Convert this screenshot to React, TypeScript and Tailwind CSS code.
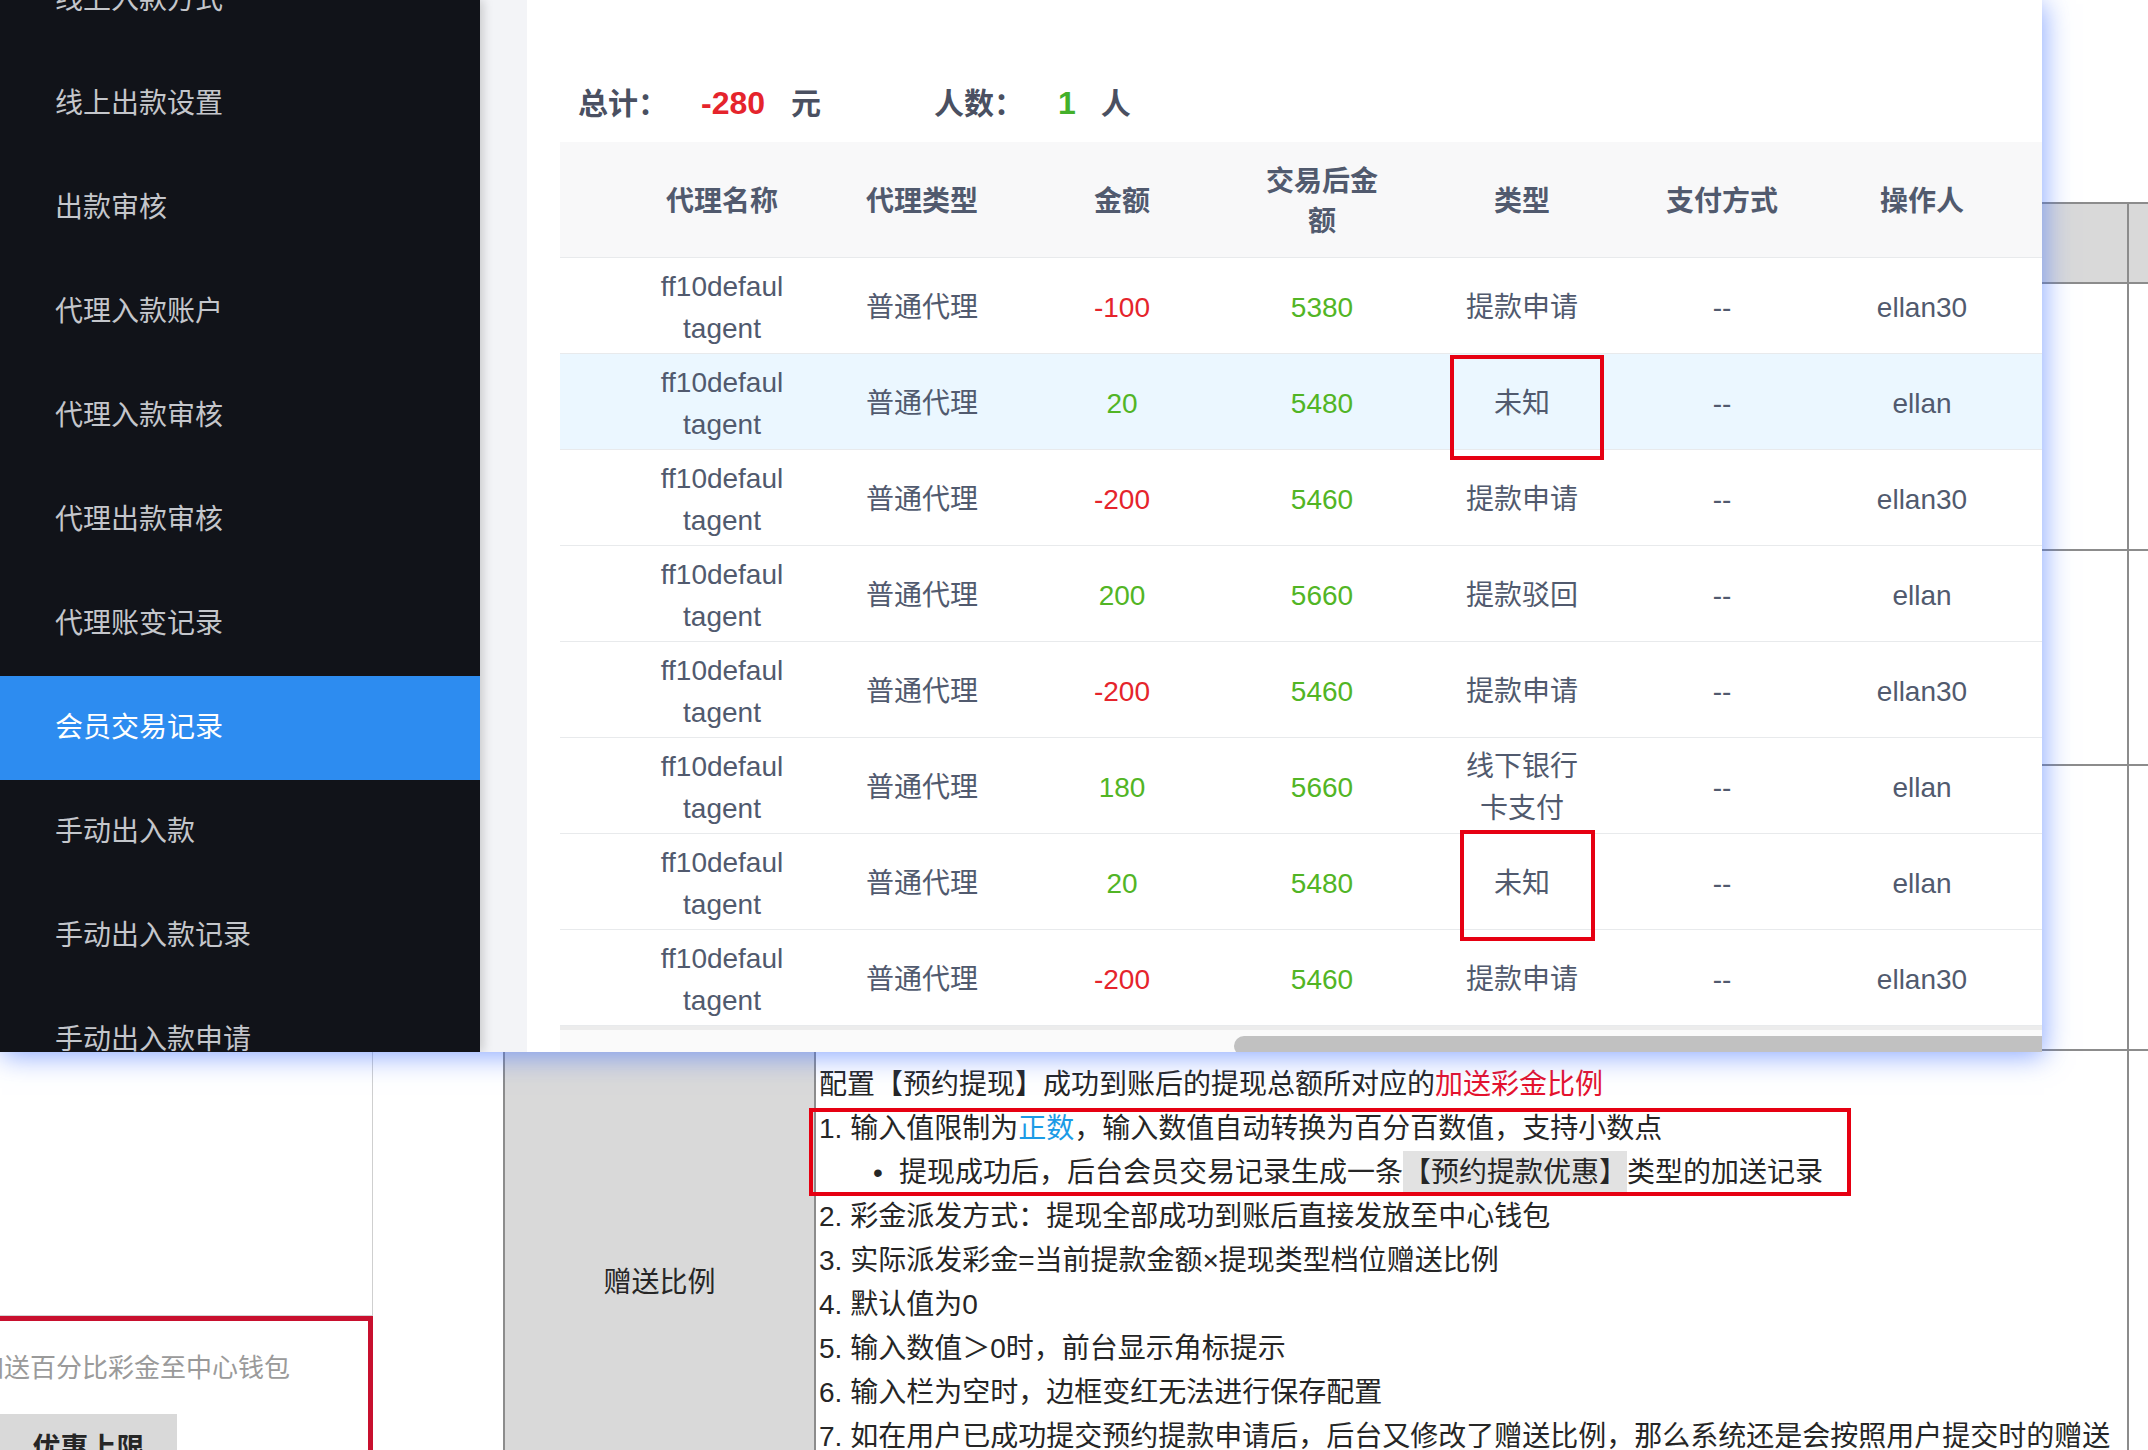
import React from 'react';

const menu = [
  '线上入款方式',
  '线上出款设置',
  '出款审核',
  '代理入款账户',
  '代理入款审核',
  '代理出款审核',
  '代理账变记录',
  '会员交易记录',
  '手动出入款',
  '手动出入款记录',
  '手动出入款申请',
];

const headers = ['代理名称', '代理类型', '金额', '交易后金额', '类型', '支付方式', '操作人'];

type Row = { amt: string; after: string; type: string; op: string; box?: 1 | 2 };

const rows: Row[] = [
  { amt: '-100', after: '5380', type: '提款申请', op: 'ellan30' },
  { amt: '20', after: '5480', type: '未知', op: 'ellan', box: 1 },
  { amt: '-200', after: '5460', type: '提款申请', op: 'ellan30' },
  { amt: '200', after: '5660', type: '提款驳回', op: 'ellan' },
  { amt: '-200', after: '5460', type: '提款申请', op: 'ellan30' },
  { amt: '180', after: '5660', type: '线下银行卡支付', op: 'ellan' },
  { amt: '20', after: '5480', type: '未知', op: 'ellan', box: 2 },
  { amt: '-200', after: '5460', type: '提款申请', op: 'ellan30' },
];

const cell = 'flex items-center justify-center text-center px-[37px] pt-[5px] break-all';

const Sidebar = () => (
  <div className="w-[480px] shrink-0 bg-[#111319] shadow-[3px_0_10px_rgba(0,0,0,0.18)] z-10 overflow-hidden">
    <div className="-mt-[52px]">
      {menu.map((m, i) => (
        <div
          key={m}
          className={`h-[104px] flex items-center pl-[55px] text-[28px] ${
            i === 7 ? 'bg-[#2d8cf0] text-white' : 'text-[#c4c6cb]'
          }`}
        >
          {m}
        </div>
      ))}
    </div>
  </div>
);

const RecordTable = () => (
  <div className="w-[1482px] text-[28px] text-[#515a6e] leading-[42px]">
    {/* Header */}
    <div className="grid grid-cols-[62px_repeat(7,200px)_20px] h-[116px] bg-[#f8f8f9] border-b border-[#e8eaec] font-bold leading-[40px]">
      <div />
      {headers.map((h) => (
        <div key={h} className={cell}>{h}</div>
      ))}
      <div />
    </div>

    {/* Rows */}
    {rows.map((r, i) => (
      <div
        key={i}
        className={`grid grid-cols-[62px_repeat(7,200px)_20px] h-[96px] border-b border-[#e8eaec] ${
          i === 1 ? 'bg-[#ebf7ff]' : ''
        }`}
      >
        <div />
        <div className={cell}>ff10defaultagent</div>
        <div className={cell}>普通代理</div>
        <div className={`${cell} ${r.amt.startsWith('-') ? 'text-[#e5242c]' : 'text-[#52b525]'}`}>{r.amt}</div>
        <div className={`${cell} text-[#52b525]`}>{r.after}</div>
        <div className={`${cell} ${r.box ? 'relative' : ''}`}>
          {r.type}
          {r.box === 1 && (
            <div className="absolute left-[28px] top-[1px] w-[154px] h-[105px] border-4 border-[#e60012]" />
          )}
          {r.box === 2 && (
            <div className="absolute left-[38px] top-[-4px] w-[135px] h-[111px] border-4 border-[#e60012]" />
          )}
        </div>
        <div className={cell}>--</div>
        <div className={cell}>{r.op}</div>
        <div />
      </div>
    ))}

    {/* Horizontal scroll bar */}
    <div className="h-[4px] bg-[#ececec]" />
    <div className="h-[24px] bg-[#fafafa] pt-[6px]">
      <div className="ml-[674px] w-[808px] h-[20px] bg-[#c1c1c1] rounded-l-full" />
    </div>
  </div>
);

const Overlay = () => (
  <div className="absolute left-0 top-0 w-[2042px] h-[1052px] flex overflow-hidden shadow-[2px_4px_26px_rgba(60,110,255,0.6)] font-['Liberation_Sans','Noto_Sans_CJK_SC',sans-serif]">
    <Sidebar />
    <div className="flex-1 flex min-w-0">
      <div className="w-[47px] shrink-0 bg-[#f3f4f7]" />
      <div className="flex-1 bg-white pl-[33px] pt-[80px] overflow-hidden">
        <div className="h-[46px] mb-[16px] ml-[18px] flex items-center text-[30px] font-semibold text-[#4a5061]">
          <span>总计：</span>
          <span className="ml-[33px] text-[32px] font-bold text-[#e5242c]">-280</span>
          <span className="ml-[26px]">元</span>
          <span className="ml-[113px]">人数：</span>
          <span className="ml-[34px] text-[32px] font-bold text-[#43b02a]">1</span>
          <span className="ml-[25px]">人</span>
        </div>
        <RecordTable />
      </div>
    </div>
  </div>
);

const line = 'h-[44px] leading-[44px] whitespace-nowrap';

const DocBackground = () => (
  <div className="w-[2148px] h-[1450px] flex flex-col bg-white text-[#262626] font-['Liberation_Sans','Noto_Sans_CJK_SC',sans-serif]">
    <div className="h-[202px] shrink-0" />
    <div className="h-[82px] shrink-0 flex border-y-2 border-[#8c8c8c] bg-[#d9d9d9]">
      <div className="flex-1" />
      <div className="w-[21px] border-l-2 border-[#8c8c8c]" />
    </div>
    <div className="h-[267px] shrink-0 flex border-b-2 border-[#8c8c8c]">
      <div className="flex-1" />
      <div className="w-[21px] border-l-2 border-[#8c8c8c]" />
    </div>
    <div className="h-[215px] shrink-0 flex border-b-2 border-[#8c8c8c]">
      <div className="flex-1" />
      <div className="w-[21px] border-l-2 border-[#8c8c8c]" />
    </div>
    <div className="h-[285px] shrink-0 flex border-b-2 border-[#8c8c8c]">
      <div className="flex-1" />
      <div className="w-[21px] border-l-2 border-[#8c8c8c]" />
    </div>

    {/* 赠送比例 row */}
    <div className="h-[464px] shrink-0 flex">
      <div className="w-[373px] shrink-0 flex flex-col border-r border-[#cfcfcf]">
        <div className="h-[265px] shrink-0 border-b border-[#d4d4d4]" />
        <div className="flex-1 border-t-[5px] border-r-[5px] border-[#c8102e] -mr-px">
          <div className="pt-[29px] -ml-[22px] text-[26px] leading-[36px] text-[#9a9a9a] whitespace-nowrap">
            加送百分比彩金至中心钱包
          </div>
          <div className="mt-[28px] w-[177px] h-[70px] bg-[#d9d9d9] flex items-start justify-center pt-[14px] text-[28px] font-bold text-[#262626]">
            优惠上限
          </div>
        </div>
      </div>
      <div className="w-[132px] shrink-0 border-r-2 border-[#8c8c8c]" />
      <div className="w-[311px] shrink-0 bg-[#d9d9d9] border-r-2 border-[#8c8c8c] flex items-center justify-center text-[28px]">
        赠送比例
      </div>
      <div className="w-[1311px] shrink-0 pl-[3px] pt-[12px] text-[28px]">
        <div className={line}>
          配置【预约提现】成功到账后的提现总额所对应的<span className="text-[#e5122d]">加送彩金比例</span>
        </div>
        <div className="relative">
          <div className={line}>
            1. 输入值限制为<span className="text-[#1c9be6]">正数</span>，输入数值自动转换为百分百数值，支持小数点
          </div>
          <div className={`${line} flex pl-[54px]`}>
            <span className="w-[26px]">•</span>
            <span>提现成功后，后台会员交易记录生成一条</span>
            <span className="bg-[#e2e2e2]">【预约提款优惠】</span>
            <span>类型的加送记录</span>
          </div>
          <div className="absolute left-[-10px] top-[1px] w-[1042px] h-[88px] border-4 border-[#e60012]" />
        </div>
        <div className={line}>2. 彩金派发方式：提现全部成功到账后直接发放至中心钱包</div>
        <div className={line}>3. 实际派发彩金=当前提款金额×提现类型档位赠送比例</div>
        <div className={line}>4. 默认值为0</div>
        <div className={line}>5. 输入数值＞0时，前台显示角标提示</div>
        <div className={line}>6. 输入栏为空时，边框变红无法进行保存配置</div>
        <div className={line}>7. 如在用户已成功提交预约提款申请后，后台又修改了赠送比例，那么系统还是会按照用户提交时的赠送</div>
      </div>
      <div className="w-[21px] shrink-0 border-l-2 border-[#8c8c8c]" />
    </div>
  </div>
);

export default function App() {
  return (
    <div className="relative w-[2148px] h-[1450px] overflow-hidden bg-white">
      <DocBackground />
      <Overlay />
    </div>
  );
}
